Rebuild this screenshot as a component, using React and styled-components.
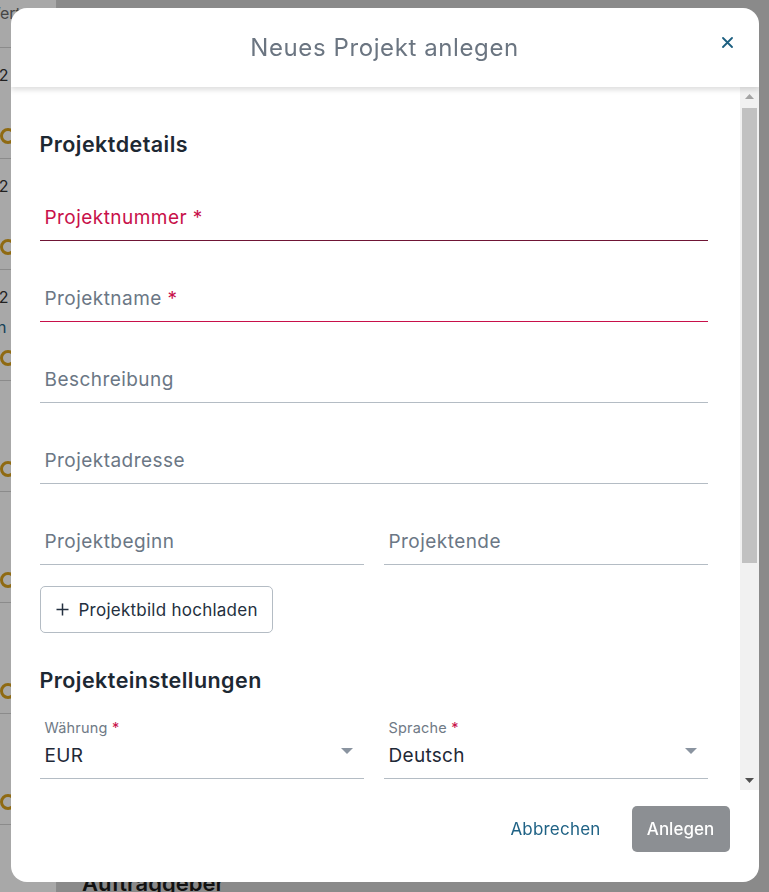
import React from 'react';
import styled, { createGlobalStyle } from 'styled-components';

const GlobalStyle = createGlobalStyle`
  html, body { margin: 0; height: 100%; }
  body {
    font-family: Inter, "Noto Sans", sans-serif;
    background: #d2d2d2;
    overflow: hidden;
  }
  * { box-sizing: border-box; }
`;

// ---- page behind the dialog ----
const Page = styled.div`
  display: flex;
  height: 100vh;
`;

const SideList = styled.div`
  width: 57px;
  flex-shrink: 0;
  background: #fff;
  border-right: 1px solid #d4d4d4;
  overflow: hidden;
`;

const ListHead = styled.div`
  height: 48px;
  border-bottom: 1px solid #d4d4d4;
  padding-top: 3px;
  font-size: 16px;
  color: #6b6b6b;
  white-space: nowrap;
  span { margin-left: -15px; }
`;

const ListRow = styled.div`
  height: 111px;
  border-bottom: 1px solid #d4d4d4;
  padding-top: 18px;
  white-space: nowrap;
`;

const RowDate = styled.div`
  height: 18px;
  line-height: 18px;
  font-size: 16px;
  color: #333;
  margin-left: -76px;
`;

const RowLink = styled.div`
  height: 18px;
  line-height: 18px;
  margin-top: 12px;
  font-size: 16px;
  color: #1f6285;
  margin-left: -60px;
`;

const Ring = styled.div`
  width: 16px;
  height: 16px;
  margin-top: 14px;
  border: 3px solid #d9a21c;
  border-radius: 50%;
`;

const MainArea = styled.div`
  flex: 1;
  display: flex;
  flex-direction: column;
  justify-content: flex-end;
  padding-left: 25px;
`;

const PageHeading = styled.div`
  font-size: 22px;
  line-height: 28px;
  font-weight: 600;
  color: #1c1c1c;
  margin-bottom: -5px;
`;

// ---- dialog ----
const Overlay = styled.div`
  position: fixed;
  inset: 0;
  background: rgba(0, 0, 0, 0.34);
  display: flex;
  justify-content: center;
  align-items: flex-start;
  padding-top: 8px;
`;

const Dialog = styled.div`
  width: 748px;
  height: 874px;
  background: #fff;
  border-radius: 16px;
  display: flex;
  flex-direction: column;
  overflow: hidden;
`;

const Header = styled.div`
  height: 79px;
  flex-shrink: 0;
  display: grid;
  grid-template-columns: 1fr auto 1fr;
  align-items: center;
  box-shadow: 0 3px 5px rgba(0, 0, 0, 0.13);
  position: relative;
  z-index: 1;
`;

const Title = styled.h2`
  grid-column: 2;
  margin: 0;
  font-size: 24px;
  letter-spacing: 0.6px;
  font-weight: 400;
  color: #6b7581;
`;

const CloseButton = styled.button`
  justify-self: end;
  align-self: start;
  margin: 25px 18px 0 0;
  width: 26px;
  height: 18px;
  border: 0;
  padding: 0;
  background: none;
  display: flex;
  align-items: center;
  justify-content: center;
  cursor: pointer;
`;

const Body = styled.div`
  flex: 1;
  min-height: 0;
  display: flex;
`;

const ScrollContent = styled.div`
  flex: 1;
  overflow: hidden;
  padding: 43px 32px 0 29px;
`;

const ScrollRail = styled.div`
  width: 19px;
  flex-shrink: 0;
  background: #f1f1f1;
  display: flex;
  flex-direction: column;
`;

const RailArrow = styled.div`
  height: 19px;
  display: flex;
  align-items: center;
  justify-content: center;
`;

const RailTrack = styled.div`
  flex: 1;
  padding: 2px;
`;

const Thumb = styled.div`
  height: ${p => p.$size}px;
  background: #c1c1c1;
`;

const SectionTitle = styled.h3`
  margin: ${p => (p.$spaced ? '33px' : '0')} 0 2px;
  font-size: 21.5px;
  letter-spacing: 0.45px;
  line-height: 28px;
  font-weight: 600;
  color: #1d2833;
`;

const lineColors = { focus: '#6f1535', error: '#c8104a' };

const Field = styled.div`
  padding: 46px 0 10px 5px;
  border-bottom: 1px solid ${p => lineColors[p.$tone] || '#b4bcc4'};
`;

const Label = styled.span`
  display: block;
  font-size: 19px;
  letter-spacing: 0.45px;
  line-height: 24px;
  color: ${p => (p.$tone === 'focus' ? '#c8104a' : '#6b7785')};
`;

const Req = styled.span`
  color: #c8104a;
`;

const TwoCols = styled.div`
  display: grid;
  grid-template-columns: 1fr 1fr;
  column-gap: 20px;
`;

const UploadButton = styled.button`
  margin-top: 21px;
  height: 47px;
  display: inline-flex;
  align-items: center;
  gap: 10px;
  padding: 0 14px 0 15px;
  background: #fff;
  border: 1px solid #b4bcc4;
  border-radius: 5px;
  font-family: inherit;
  font-size: 17px;
  letter-spacing: 0.25px;
  color: #243040;
`;

const Select = styled.div`
  padding: 23px 0 9px 5px;
  border-bottom: 1px solid #b4bcc4;
`;

const SmallLabel = styled.div`
  font-size: 14.5px;
  letter-spacing: 0.2px;
  line-height: 18px;
  color: #6f7a86;
`;

const ValueRow = styled.div`
  display: flex;
  align-items: center;
  justify-content: space-between;
  margin-top: 4px;
  height: 28px;
`;

const Value = styled.span`
  font-size: 19px;
  letter-spacing: 0.3px;
  color: #1f2937;
`;

const Caret = styled.svg`
  margin: 0 11px 8px 0;
`;

const Footer = styled.div`
  flex-shrink: 0;
  display: flex;
  justify-content: flex-end;
  align-items: flex-start;
  gap: 15px;
  padding: 16px 29px 30px;
`;

const TextButton = styled.button`
  height: 46px;
  padding: 0 16px;
  border: 0;
  background: none;
  font-family: inherit;
  font-size: 17px;
  letter-spacing: 0.2px;
  color: #1f6285;
`;

const PrimaryButton = styled.button`
  height: 46px;
  width: 98px;
  border: 0;
  border-radius: 5px;
  background: #8c8f93;
  font-family: inherit;
  font-size: 17px;
  font-weight: 500;
  color: #fff;
`;

const rows = [
  { date: '01.03.2022' },
  { date: '01.03.2022' },
  { date: '01.03.2022', link: 'Ansehen' },
  {}, {}, {}, {},
];

const SelectField = ({ label, value }) => (
  <Select>
    <SmallLabel>{label} <Req>*</Req></SmallLabel>
    <ValueRow>
      <Value>{value}</Value>
      <Caret width="12" height="6" viewBox="0 0 12 6">
        <path d="M0 0h12L6 6z" fill="#8a94a0" />
      </Caret>
    </ValueRow>
  </Select>
);

export default function App() {
  return (
    <>
      <GlobalStyle />
      <Page>
        <SideList>
          <ListHead><span>Wert</span></ListHead>
          {rows.map((r, i) => (
            <ListRow key={i}>
              <RowDate>{r.date}</RowDate>
              <RowLink>{r.link}</RowLink>
              <Ring />
            </ListRow>
          ))}
        </SideList>
        <MainArea>
          <PageHeading>Auftraggeber</PageHeading>
        </MainArea>
      </Page>

      <Overlay>
        <Dialog>
          <Header>
            <Title>Neues Projekt anlegen</Title>
            <CloseButton aria-label="Schließen">
              <svg width="11" height="11" viewBox="0 0 11 11">
                <path d="M1 1l9 9M10 1l-9 9" stroke="#1c5f80" strokeWidth="1.8" strokeLinecap="round" />
              </svg>
            </CloseButton>
          </Header>

          <Body>
            <ScrollContent>
              <SectionTitle>Projektdetails</SectionTitle>
              <Field $tone="focus">
                <Label $tone="focus">Projektnummer *</Label>
              </Field>
              <Field $tone="error">
                <Label>Projektname <Req>*</Req></Label>
              </Field>
              <Field>
                <Label>Beschreibung</Label>
              </Field>
              <Field>
                <Label>Projektadresse</Label>
              </Field>
              <TwoCols>
                <Field>
                  <Label>Projektbeginn</Label>
                </Field>
                <Field>
                  <Label>Projektende</Label>
                </Field>
              </TwoCols>
              <UploadButton>
                <svg width="13" height="13" viewBox="0 0 13 13">
                  <path d="M6.5 0.5v12M0.5 6.5h12" stroke="#243040" strokeWidth="1.5" />
                </svg>
                Projektbild hochladen
              </UploadButton>

              <SectionTitle $spaced>Projekteinstellungen</SectionTitle>
              <TwoCols>
                <SelectField label="Währung" value="EUR" />
                <SelectField label="Sprache" value="Deutsch" />
              </TwoCols>

              <SectionTitle $spaced>Auftraggeber</SectionTitle>
              <Field>
                <Label>Firma</Label>
              </Field>
            </ScrollContent>

            <ScrollRail>
              <RailArrow>
                <svg width="9" height="5" viewBox="0 0 9 5">
                  <path d="M0 5h9L4.5 0z" fill="#a3a3a3" />
                </svg>
              </RailArrow>
              <RailTrack>
                <Thumb $size={455} />
              </RailTrack>
              <RailArrow>
                <svg width="9" height="5" viewBox="0 0 9 5">
                  <path d="M0 0h9L4.5 5z" fill="#505050" />
                </svg>
              </RailArrow>
            </ScrollRail>
          </Body>

          <Footer>
            <TextButton>Abbrechen</TextButton>
            <PrimaryButton>Anlegen</PrimaryButton>
          </Footer>
        </Dialog>
      </Overlay>
    </>
  );
}
